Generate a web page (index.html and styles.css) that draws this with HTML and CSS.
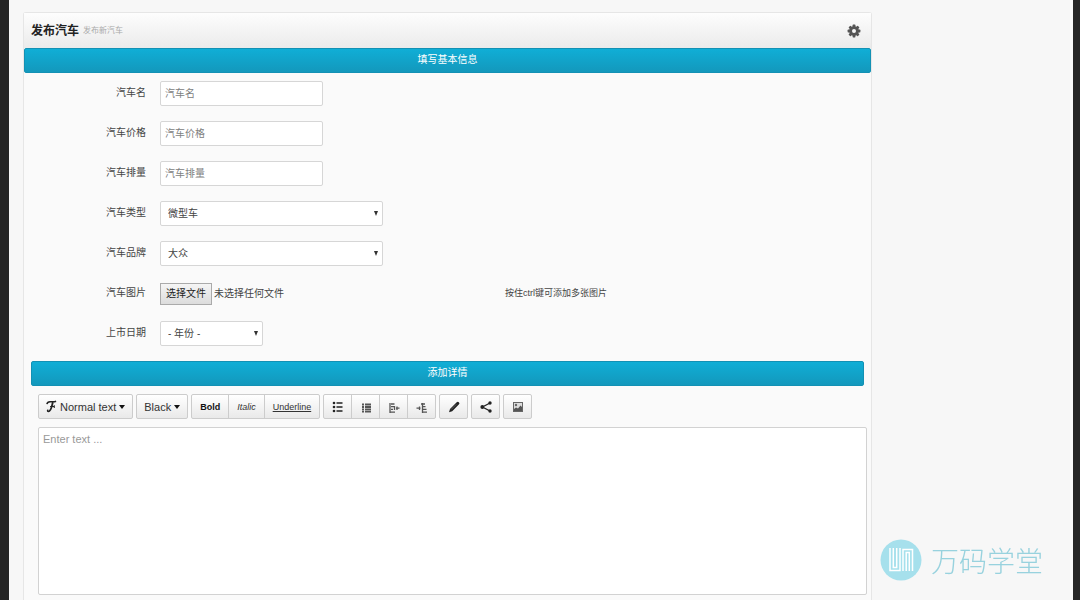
FILE: index.html
```
<!DOCTYPE html>
<html lang="zh-CN">
<head>
<meta charset="utf-8">
<title>发布汽车</title>
<link rel="stylesheet" href="styles.css">
</head>
<body>
<main class="page">
  <section class="panel">
    <header class="panel-header">
      <h1 class="title">发布汽车</h1>
      <small class="subtitle">发布新汽车</small>
      <button class="gear" type="button" aria-label="设置">
        <svg viewBox="0 0 14 14" width="14" height="14"><g fill="#555"><rect x="5.6" y="0.6" width="2.8" height="12.8" rx=".6"/><rect x="5.6" y="0.6" width="2.8" height="12.8" rx=".6" transform="rotate(45 7 7)"/><rect x="5.6" y="0.6" width="2.8" height="12.8" rx=".6" transform="rotate(90 7 7)"/><rect x="5.6" y="0.6" width="2.8" height="12.8" rx=".6" transform="rotate(135 7 7)"/><circle cx="7" cy="7" r="4.8"/></g><circle cx="7" cy="7" r="2" fill="#f6f6f6"/></svg>
      </button>
    </header>
    <h2 class="bar">填写基本信息</h2>
    <form class="form">
      <div class="row"><label class="label" for="name">汽车名</label><input class="field" id="name" type="text" placeholder="汽车名"></div>
      <div class="row"><label class="label" for="price">汽车价格</label><input class="field" id="price" type="text" placeholder="汽车价格"></div>
      <div class="row"><label class="label" for="engine">汽车排量</label><input class="field" id="engine" type="text" placeholder="汽车排量"></div>
      <div class="row"><label class="label" for="type">汽车类型</label><span class="select"><select class="field" id="type"><option>微型车</option></select></span></div>
      <div class="row"><label class="label" for="brand">汽车品牌</label><span class="select"><select class="field" id="brand"><option>大众</option></select></span></div>
      <div class="row"><span class="label">汽车图片</span><span class="file"><input class="file-input" id="photo" type="file" multiple><label class="file-button" for="photo">选择文件</label><span>未选择任何文件</span></span><span class="hint">按住ctrl键可添加多张图片</span></div>
      <div class="row"><label class="label" for="year">上市日期</label><span class="select select-small"><select class="field" id="year"><option>- 年份 -</option></select></span></div>
      <h2 class="bar">添加详情</h2>
      <div class="editor">
        <div class="toolbar">
          <div class="group"><button class="tool" type="button"><svg viewBox="0 0 12 14" width="11" height="13" fill="none" stroke="#222"><path d="M1 4.5C1.5 2 3 1.6 5 1.8C7.500 2 9 2.200 11 1.300" stroke-width="1.7"/><path d="M7.500 2.200C6.500 5 6 12.500 2.600 12.300C1.500 12.200 1.700 11 2.500 10.900" stroke-width="2"/><path d="M4.500 7H9.500M9 5.500V8.500" stroke-width="1.2"/></svg>Normal text<span class="caret"></span></button></div>
          <div class="group"><button class="tool" type="button">Black<span class="caret"></span></button></div>
          <div class="group">
            <button class="tool small bold" type="button">Bold</button>
            <button class="tool small italic" type="button">Italic</button>
            <button class="tool small underline" type="button">Underline</button>
          </div>
          <div class="group">
            <button class="tool icon" type="button" aria-label="无序列表"><svg viewBox="0 0 12 12" width="12" height="12" fill="#222"><circle cx="2" cy="2" r="1.3"/><circle cx="2" cy="6" r="1.3"/><circle cx="2" cy="10" r="1.300"/><path d="M4.500 1.300h6v1.400h-6zM4.500 5.300h6v1.400h-6zM4.500 9.300h6v1.400h-6z"/></svg></button>
            <button class="tool icon" type="button" aria-label="有序列表"><svg viewBox="0 0 12 12" width="12" height="12" fill="#555"><path d="M2 2.500h2v2H2zM5 2.500h6v2H5zM2 5h2v2H2zM5 5h6v2H5zM2 7.500h2v2H2zM5 7.500h6v2H5zM2 10h2v1.500H2zM5 10h6v1.500H5z"/></svg></button>
            <button class="tool icon" type="button" aria-label="减少缩进"><svg viewBox="0 0 12 12" width="12" height="12" fill="none" stroke="#555" stroke-width="1.3"><path d="M2 2v10M3 3h3.500M3 5.700h3M3 8.300h2M2 11.200h5M6.500 5v4M8 7.200h3.500M9 5.500v3.500"/></svg></button>
            <button class="tool icon" type="button" aria-label="增加缩进"><svg viewBox="0 0 12 12" width="12" height="12" fill="none" stroke="#555" stroke-width="1.3"><path d="M6.500 2v10M5 3h4M6.500 5.700h3M6.500 8.300h4M6 11.200h5M.5 7.200h4M3.500 5.500v3.500"/></svg></button>
          </div>
          <div class="group"><button class="tool icon" type="button" aria-label="编辑源码"><svg viewBox="0 0 12 12" width="12" height="12" fill="#222"><path d="M1 11.300L2 8L8.700 1.300Q10 .3 11 1.500Q12 2.500 10.800 3.500L4.200 10.200Z"/><path d="M3 8.600L8.300 3.300" stroke="#999" stroke-width=".5"/></svg></button></div>
          <div class="group"><button class="tool icon" type="button" aria-label="插入链接"><svg viewBox="0 0 12 12" width="12" height="12" fill="#222"><path d="M10 2L2.500 6L10 10" fill="none" stroke="#222" stroke-width="1.3"/><circle cx="10" cy="2" r="1.700"/><circle cx="2.300" cy="6" r="1.900"/><circle cx="10" cy="10" r="1.700"/></svg></button></div>
          <div class="group"><button class="tool icon" type="button" aria-label="插入图片"><svg viewBox="0 0 12 12" width="12" height="12"><rect x="1.500" y="1.500" width="9" height="9" fill="#ddd" stroke="#666"/><path d="M2 10V8l2-1.500 2 1 2.500-3L10 6v4z" fill="#555"/><circle cx="4" cy="4" r="1.200" fill="#666"/></svg></button></div>
        </div>
        <textarea class="text" aria-label="详情" placeholder="Enter text ..."></textarea>
      </div>
    </form>
  </section>
</main>
<div class="brand">
  <svg viewBox="0 0 42 42" width="42" height="42"><circle cx="21" cy="21" r="20.500" fill="#a6e0ec"/><path d="M10 9V31.500H20V9M13.300 9V28.500H16.700V9M23 32V10.500H32.500V32M26.200 32V13.500H29.300V32" fill="none" stroke="#fff" stroke-width="1.500"/></svg>
  <span>万码学堂</span>
</div>
</body>
</html>
```
FILE: styles.css
```
* { box-sizing: border-box; }
body {
  margin: 0;
  background: #f7f7f7;
  color: #444;
  font: 10px/16px "Liberation Sans", "Noto Sans CJK SC", sans-serif;
}
button, input, select, textarea { font: inherit; color: inherit; }
.page {
  display: grid;
  grid-template-columns: 849fr 201fr;
  min-height: 100vh;
  padding: 12px 0 0 14px;
  border: solid #252525;
  border-width: 0 7px 0 9px;
}
.panel {
  background: #fafafa;
  border: 1px solid #e6e6e6;
  border-bottom: 0;
  border-radius: 3px 3px 0 0;
}
.panel-header {
  display: flex;
  align-items: center;
  gap: 4px;
  height: 35px;
  padding: 0 10px 0 7px;
  background: linear-gradient(#fdfdfd, #ebebeb);
}
.title { margin: 0; font-size: 12px; color: #222; }
.subtitle { font-size: 8px; color: #aaa; }
.gear {
  display: flex;
  margin-left: auto;
  padding: 0;
  border: 0;
  background: none;
}
.bar {
  margin: 0;
  padding: 3px 0 4px;
  border: 1px solid #1391b4;
  border-radius: 2px;
  background: linear-gradient(#10aed6, #1398bc);
  color: #fff;
  font-size: 10px;
  font-weight: 400;
  text-align: center;
}
.form { padding: 8px 7px 0; }
.row {
  display: flex;
  gap: 14px;
  min-height: 25px;
  margin-bottom: 15px;
}
.label { width: 115px; padding-top: 4px; text-align: right; }
.field {
  width: 163px;
  height: 25px;
  padding: 0 4px;
  border: 1px solid #d6d6d6;
  border-radius: 2px;
  background: #fff;
}
.field::placeholder { color: #808080; opacity: 1; }
.select { display: grid; align-items: center; width: 223px; }
.select-small { width: 103px; }
.select .field {
  grid-area: 1 / 1;
  width: 100%;
  padding: 0 7px;
  appearance: none;
}
.select::after {
  content: "";
  grid-area: 1 / 1;
  justify-self: end;
  margin-right: 5px;
  border: solid transparent;
  border-width: 5px 2px 0;
  border-top-color: #333;
  pointer-events: none;
}
.file { display: flex; align-items: center; gap: 2px; width: 331px; }
.file-input { position: absolute; width: 1px; height: 1px; opacity: 0; }
.file-button {
  padding: 2px 5px;
  border: 1px solid #aaa;
  background: linear-gradient(#f5f5f5, #dcdcdc);
  color: #222;
}
.hint { padding-top: 4px; font-size: 9px; }
.editor { padding: 8px 0 0 7px; }
.toolbar { display: flex; flex-wrap: wrap; gap: 3px; margin-bottom: 8px; }
.group { display: flex; }
.tool {
  display: flex;
  align-items: center;
  justify-content: center;
  gap: 3px;
  height: 25px;
  padding: 0 7px;
  border: 1px solid #ccc;
  background: linear-gradient(#fff, #e9e9e9);
  color: #333;
  font-size: 11px;
}
.tool + .tool { margin-left: -1px; }
.tool:first-child { border-radius: 2px 0 0 2px; }
.tool:last-child { border-radius: 0 2px 2px 0; }
.tool:only-child { border-radius: 2px; }
.small { padding: 0 8px; font-size: 9px; }
.bold { font-weight: 700; color: #111; }
.italic { font-style: italic; }
.underline { text-decoration: underline; }
.icon { width: 29px; padding: 0; }
.caret { border: solid transparent; border-width: 4px 3px 0; border-top-color: #111; }
.text {
  display: block;
  width: calc(100% + 3px);
  height: 168px;
  padding: 3px 4px;
  border: 1px solid #d2d2d2;
  border-radius: 2px;
  background: #fff;
  font-size: 11px;
  resize: none;
}
.text::placeholder { color: #999; opacity: 1; }
.brand {
  position: fixed;
  right: 37px;
  bottom: 19px;
  display: flex;
  align-items: center;
  gap: 9px;
  color: #98d2de;
  font: 300 28px/42px "Noto Sans CJK SC", sans-serif;
}
```
